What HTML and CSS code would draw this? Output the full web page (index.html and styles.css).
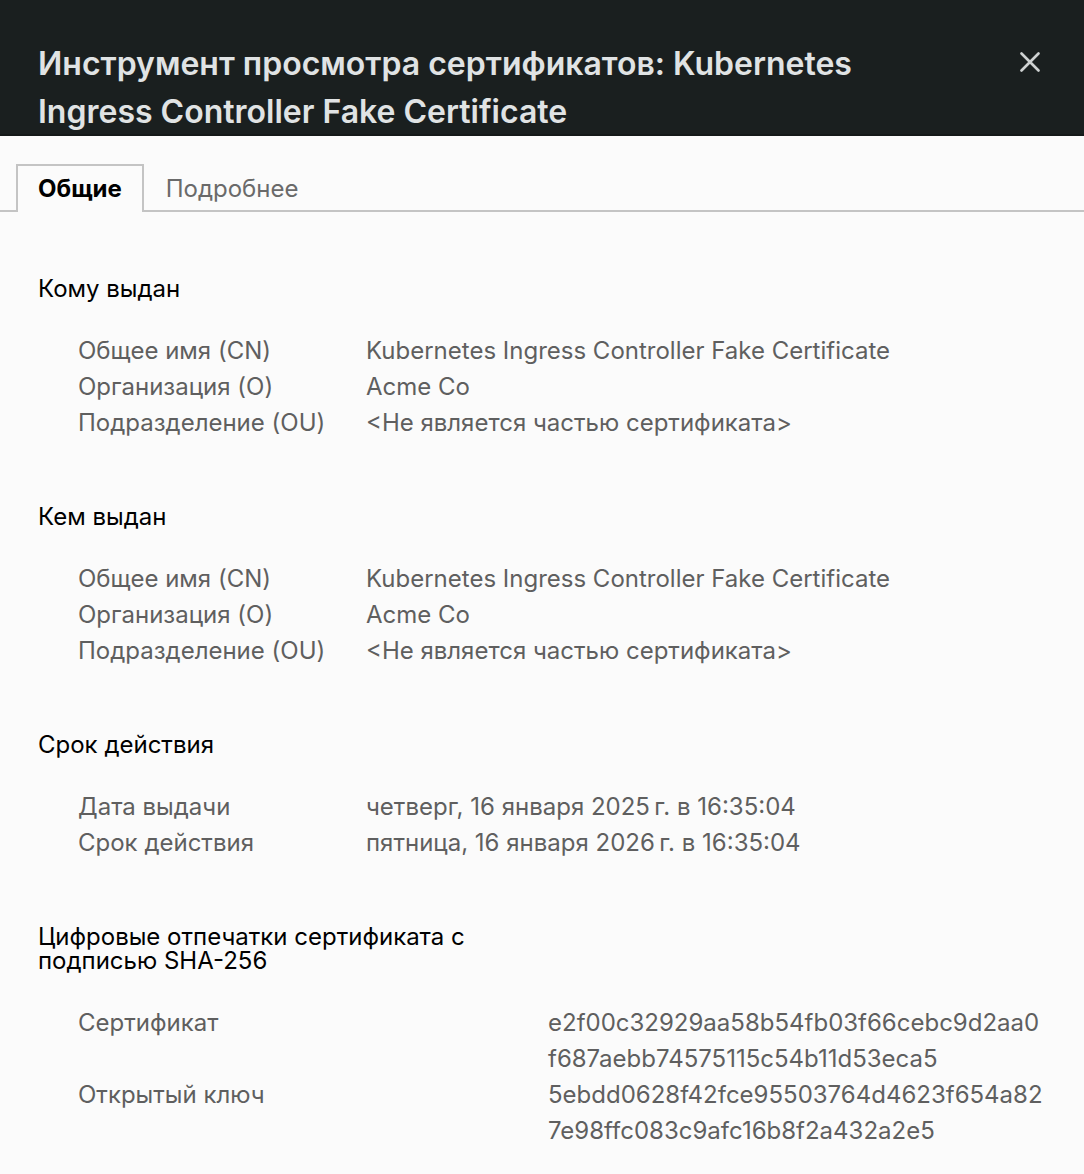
FILE: index.html
```html
<!DOCTYPE html>
<html lang="ru">
<head>
<meta charset="utf-8">
<meta name="viewport" content="width=device-width, initial-scale=1">
<title>Инструмент просмотра сертификатов</title>
<link rel="stylesheet" href="styles.css">
</head>
<body>
<header class="header">
  <h1 class="title">Инструмент просмотра сертификатов: Kubernetes Ingress Controller Fake Certificate</h1>
  <button class="close" type="button" aria-label="Закрыть">
    <svg width="20" height="20" viewBox="0 0 20 20" aria-hidden="true"><path d="M1.5 1.5 18.5 18.5M18.5 1.5 1.5 18.5" fill="none" stroke="currentColor" stroke-width="2.6" stroke-linecap="round"/></svg>
  </button>
</header>
<nav class="tabs" role="tablist">
  <button class="tab tab-active" type="button" role="tab" aria-selected="true">Общие</button>
  <button class="tab" type="button" role="tab" aria-selected="false">Подробнее</button>
</nav>
<main class="content">
  <section class="group">
    <h2 class="heading">Кому выдан</h2>
    <dl class="fields">
      <dt>Общее имя (CN)</dt><dd>Kubernetes Ingress Controller Fake Certificate</dd>
      <dt>Организация (O)</dt><dd>Acme Co</dd>
      <dt>Подразделение (OU)</dt><dd>&lt;Не является частью сертификата&gt;</dd>
    </dl>
  </section>
  <section class="group">
    <h2 class="heading">Кем выдан</h2>
    <dl class="fields">
      <dt>Общее имя (CN)</dt><dd>Kubernetes Ingress Controller Fake Certificate</dd>
      <dt>Организация (O)</dt><dd>Acme Co</dd>
      <dt>Подразделение (OU)</dt><dd>&lt;Не является частью сертификата&gt;</dd>
    </dl>
  </section>
  <section class="group">
    <h2 class="heading">Срок действия</h2>
    <dl class="fields">
      <dt>Дата выдачи</dt><dd>четверг, 16 января 2025&#8239;г. в 16:35:04</dd>
      <dt>Срок действия</dt><dd>пятница, 16 января 2026&#8239;г. в 16:35:04</dd>
    </dl>
  </section>
  <section class="group">
    <h2 class="heading">Цифровые отпечатки сертификата с подписью SHA-256</h2>
    <dl class="fields fingerprints">
      <dt>Сертификат</dt><dd>e2f00c32929aa58b54fb03f66cebc9d2aa0<wbr>f687aebb74575115c54b11d53eca5</dd>
      <dt>Открытый ключ</dt><dd>5ebdd0628f42fce95503764d4623f654a82<wbr>7e98ffc083c9afc16b8f2a432a2e5</dd>
    </dl>
  </section>
</main>
</body>
</html>
```
FILE: styles.css
```css
* { box-sizing: border-box; }
body {
  margin: 0;
  background: #fbfbfb;
  color: #5f5f5f;
  font: 24px/36px Inter, "Liberation Sans", sans-serif;
}
.header {
  display: flex;
  justify-content: space-between;
  align-items: flex-start;
  padding: 40px 44px 0 38px;
  background: #1a1f1f;
  box-shadow: inset 0 -2px #151919;
  color: #e0e3e4;
}
.title {
  max-width: 880px;
  margin: 0;
  font-size: 32px;
  font-weight: 600;
  line-height: 48px;
}
.close {
  display: flex;
  margin-top: 12px;
  padding: 0;
  border: 0;
  background: none;
  color: #ced1d1;
}
.tabs {
  display: flex;
  padding: 28px 16px 0;
  box-shadow: inset 0 -2px #c4c4c4;
}
.tab {
  height: 48px;
  padding: 0 20px;
  border: 2px solid transparent;
  border-bottom: 0;
  background: none;
  color: #6a6a6a;
  font: inherit;
}
.tab-active {
  border-color: #c4c4c4;
  background: #fbfbfb;
  color: #000;
  font-weight: 700;
}
.content {
  display: flex;
  flex-direction: column;
  gap: 64px;
  padding: 65px 38px 24px;
}
.heading {
  max-width: 440px;
  margin: 0 0 32px;
  color: #000;
  font-size: 24px;
  font-weight: 400;
  line-height: 24px;
}
.fields {
  display: grid;
  grid-template-columns: 288px 1fr;
  margin: 0;
  padding-left: 40px;
}
.fingerprints { grid-template-columns: 470px 1fr; }
.fields dt, .fields dd { margin: 0; }
```
